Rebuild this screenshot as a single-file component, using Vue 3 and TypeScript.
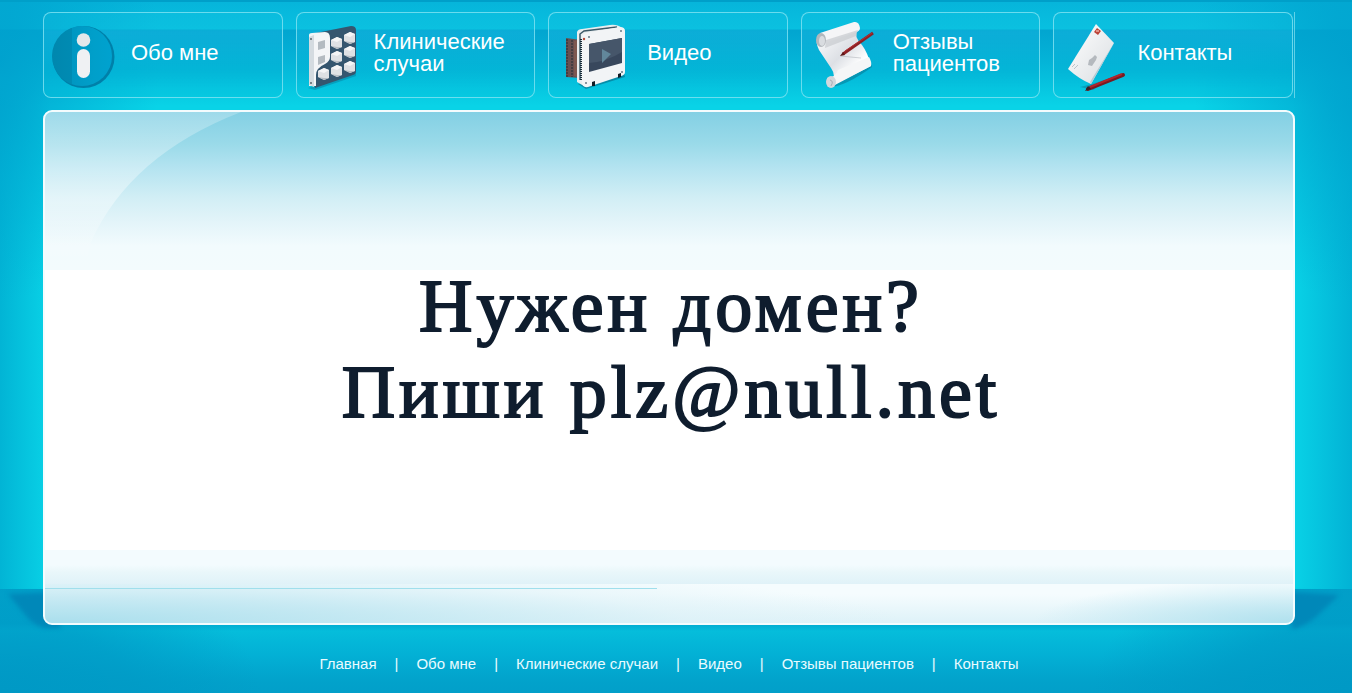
<script setup lang="ts">
interface NavItem {
  id: string
  label: string
  href: string
}

const items: NavItem[] = [
  { id: 'about', label: 'Обо мне', href: '#about' },
  { id: 'cases', label: 'Клинические\nслучаи', href: '#cases' },
  { id: 'video', label: 'Видео', href: '#video' },
  { id: 'reviews', label: 'Отзывы\nпациентов', href: '#reviews' },
  { id: 'contacts', label: 'Контакты', href: '#contacts' },
]

const footerLinks = [
  { label: 'Главная', href: '#' },
  ...items.map((item) => ({ label: item.label.replace('\n', ' '), href: item.href })),
]

const keys = [
  [337, 43], [350, 38],
  [337, 57], [350, 52],
  [324, 74], [337, 71], [350, 67],
]
</script>

<template>
  <div class="page">
    <div class="backdrop" aria-hidden="true">
      <div class="sky"></div>
      <div class="floor"></div>
      <svg class="fold fold-left" viewBox="0 0 60 50" preserveAspectRatio="none">
        <path d="M8 5 L60 3 L60 39 L44 39 Q34 36 27 28 Z" />
      </svg>
      <svg class="fold fold-right" viewBox="0 0 60 50" preserveAspectRatio="none">
        <path d="M47 6 L0 3 L0 40 Q12 38 24 28 Z" />
      </svg>
    </div>

    <nav class="nav" aria-label="Основное меню">
      <a v-for="item in items" :key="item.id" class="nav-item" :href="item.href">
        <svg v-if="item.id === 'about'" class="icon" width="68" height="72" viewBox="51 19 68 72" aria-hidden="true">
          <defs>
            <linearGradient id="disc" x1="0" x2="1">
              <stop offset="0" stop-color="#0087ae" />
              <stop offset=".33" stop-color="#008bb3" />
              <stop offset=".34" stop-color="#0097c2" />
              <stop offset=".7" stop-color="#009fca" />
              <stop offset="1" stop-color="#00a2cf" />
            </linearGradient>
          </defs>
          <circle cx="83.500" cy="57" r="31" fill="#0080a9" />
          <circle cx="82" cy="56" r="30" fill="url(#disc)" />
          <circle cx="83.500" cy="40" r="6.800" fill="#e6e8ea" />
          <rect x="77" y="49" width="13" height="29" rx="6.500" fill="#eff1f3" />
        </svg>

        <svg v-else-if="item.id === 'cases'" class="icon" width="58" height="72" viewBox="304 19 58 72" aria-hidden="true">
          <path d="M308 88 L315 90 L356 76 L356 72 Z" fill="#087fa0" opacity=".5" />
          <path d="M311 34 L351 26 Q356 26 356 30 V71 Q356 74 353 75 L315 88 Z" fill="#35566f" />
          <path d="M309 35 Q309 33 312 33 L325 32 Q330 32 330 38 V57 Q330 61 325 64 Q316 68 316 75 V86 L309 86 Z" fill="#f3f5f7" />
          <path d="M309 37 L314 35 V87 L309 85 Z" fill="#d4dbe0" />
          <path d="M318 42 L325 40 V48 L318 50 Z M318 57 L325 55 V62 L318 65 Z" fill="#b4bbc1" />
          <circle cx="311" cy="39" r="1" fill="#59636b" />
          <circle cx="311" cy="83" r="1" fill="#59636b" />
          <g v-for="(key, index) in keys" :key="index" :transform="`translate(${key[0]} ${key[1]})`">
            <path d="M-6 -3 L0 -6 L5 -4 V4 L0 6 L-6 3 Z" fill="#dfe1e4" />
            <path d="M-6 -3 L0 -6 L5 -4 L0 -1 Z" fill="#f5f5f6" />
            <path d="M-6 3 L0 6 L5 4 L0 4 Z" fill="#b5bcc3" />
          </g>
        </svg>

        <svg v-else-if="item.id === 'video'" class="icon" width="79" height="72" viewBox="556 19 79 72" aria-hidden="true">
          <path d="M578 84 L586 89 L625 77 L624 73 Z" fill="#08647d" opacity=".55" />
          <path d="M566 38 L581 40 V78 L566 77 Z" fill="#684f50" />
          <path d="M567 39 V77 M572 40 V77" stroke="#453e43" stroke-width="2" stroke-dasharray="2 1" />
          <path d="M574 41 L580 39 V78 L574 76 Z" fill="#7d5750" />
          <path d="M577 32 Q578 29 582 29 L610 25 Q617 24 622 28 L585 34 L584 86 L577 82 Z" fill="#e9edef" />
          <path d="M580 80 V34 L584 31 L617 27" fill="none" stroke="#3c5968" stroke-width="1.500" />
          <path d="M581 39 V81" stroke="#182b38" stroke-width="2" stroke-dasharray="1 1" />
          <path d="M585 33 L620 27 Q625 27 625 31 V72 Q625 75 621 76 L588 87 Q582 88 582 82 V37 Q582 34 585 33 Z" fill="#f2f4f6" />
          <path d="M589 44 L622 38 V63 L589 72 Z" fill="#38475c" />
          <path d="M589 44 L622 38 V52 Q606 62 589 63 Z" fill="#46566a" />
          <path d="M602 49 L611 54 L602 63 Z" fill="#62879b" />
          <circle cx="584" cy="39" r="1.200" fill="#b64839" />
          <g fill="#667985">
            <circle cx="589" cy="37" r="1" />
            <circle cx="621" cy="31" r="1" />
            <circle cx="586" cy="83" r="1" />
            <circle cx="622" cy="72" r="1" />
          </g>
          <path d="M592 82 L595 81 V86 L592 86 Z M618 74 L621 73 V77 L618 78 Z" fill="#111c26" />
        </svg>

        <svg v-else-if="item.id === 'reviews'" class="icon" width="72" height="72" viewBox="808 19 72 72" aria-hidden="true">
          <defs>
            <linearGradient id="scroll" x1="0" y1="0" x2="1" y2="1">
              <stop offset="0" stop-color="#ffffff" />
              <stop offset=".45" stop-color="#dde0e5" />
              <stop offset=".7" stop-color="#ffffff" />
              <stop offset="1" stop-color="#dcdfe4" />
            </linearGradient>
          </defs>
          <path d="M829 87 Q845 86 871 67 L870 64 L828 80 Z" fill="#075e7b" opacity=".4" />
          <path d="M817 38 L857 30 Q852 36 861 45 Q867 53 870 66 L830 86 Q836 76 830 68 L818 50 Q814 42 817 38 Z" fill="url(#scroll)" />
          <path d="M819 33 L853 22 Q858 21 859 28 Q859 31 855 32 L821 44 Z" fill="#f5f5f7" />
          <path d="M825 40 L857 30 Q855 34 855 36 L824 48 Z" fill="#c7cacf" opacity=".7" />
          <ellipse cx="820" cy="40" rx="5" ry="7" fill="#b3b7bc" />
          <ellipse cx="821" cy="41" rx="3" ry="5" fill="#d9dce0" />
          <path d="M826 78 Q835 77 837 70 L868 57 Q871 62 870 66 L832 86 Z" fill="#f5f6f7" />
          <ellipse cx="830" cy="82" rx="5" ry="6" fill="#d3d7dc" />
          <path d="M829 80 Q833 81 830 86" fill="none" stroke="#a9adb3" />
          <path d="M839 56 L860 58" stroke="#a6abb2" opacity=".5" />
          <path d="M842 54 L872 33" stroke="#8e2024" stroke-width="3" />
          <path d="M839 56 L842 52 L844 55 Z" fill="#5b1717" />
          <path d="M844 51 L871 33" stroke="#b03034" />
        </svg>

        <svg v-else class="icon" width="64" height="72" viewBox="1061 19 64 72" aria-hidden="true">
          <defs>
            <linearGradient id="envelope" x1="0" y1="0" x2="1" y2="1">
              <stop offset="0" stop-color="#ffffff" />
              <stop offset="1" stop-color="#d9dde1" />
            </linearGradient>
          </defs>
          <path d="M1080 87 L1092 84 L1113 77 L1093 90 Z" fill="#087391" opacity=".45" />
          <path d="M1096 24 L1114 43 L1091 84 Q1079 79 1068 69 Z" fill="url(#envelope)" />
          <path d="M1114 43 L1091 84 L1090 82 Z" fill="#b4cbd4" />
          <path d="M1097 28 L1101 31 L1098 35 L1094 32 Z" fill="#bd4338" />
          <path d="M1096 31 H1099" stroke="#ffe4d7" />
          <path d="M1088 65 L1089 60 L1092 58 L1095 55 L1097 57 L1096 60 L1092 66 Z" fill="#b4b9be" />
          <path d="M1072 67 L1075 64 M1074 69 L1078 65" stroke="#bbc4ca" />
          <path d="M1088 89 L1123 75" stroke="#781b22" stroke-width="4" stroke-linecap="round" />
          <path d="M1090 87 L1122 74" stroke="#b0252b" stroke-width="2" />
          <path d="M1085 91 L1088 86 L1091 89 Z" fill="#32222a" />
        </svg>

        <span class="nav-label">{{ item.label }}</span>
      </a>
    </nav>

    <main class="panel">
      <div class="panel-top" aria-hidden="true">
        <svg class="swoosh" viewBox="0 0 200 150" aria-hidden="true">
          <defs>
            <linearGradient id="swoosh" x1="0" y1="0" x2="0" y2="1">
              <stop offset="0" stop-color="#ffffff" stop-opacity=".22" />
              <stop offset=".6" stop-color="#ffffff" stop-opacity=".4" />
              <stop offset="1" stop-color="#ffffff" stop-opacity="0" />
            </linearGradient>
          </defs>
          <path d="M0 0 H196 Q85 43 46 130 L42 150 H0 Z" fill="url(#swoosh)" />
        </svg>
      </div>
      <div class="panel-bottom" aria-hidden="true">
        <div class="panel-glow"></div>
        <div class="panel-line"></div>
      </div>
      <h1 class="headline">
        Нужен домен?<br />
        Пиши plz@null.net
      </h1>
    </main>

    <footer class="footer">
      <template v-for="(link, index) in footerLinks" :key="link.label">
        <span v-if="index > 0" class="divider">|</span>
        <a class="footer-link" :href="link.href">{{ link.label }}</a>
      </template>
    </footer>
  </div>
</template>

<style>
body {
  margin: 0;
}
</style>

<style scoped>
.page {
  position: relative;
  box-sizing: border-box;
  display: flex;
  flex-direction: column;
  min-height: 100vh;
  padding: 12px 57px 0 43px;
  overflow: hidden;
  background: #05cfe4;
  font-family: "Liberation Sans", Arial, sans-serif;
}

.backdrop {
  position: absolute;
  inset: 0;
}

.sky {
  position: absolute;
  inset: 0;
  background:
    linear-gradient(#009fc9 0 2px, transparent 2px),
    radial-gradient(ellipse 160px 240px at 0 60px, rgba(0, 160, 205, 0.9), rgba(0, 165, 208, 0.5) 50%, transparent),
    radial-gradient(ellipse 160px 240px at 100% 60px, rgba(0, 160, 205, 0.9), rgba(0, 165, 208, 0.5) 50%, transparent),
    linear-gradient(#06b4da 0, #08c0e0 29px, #02a5d0 30px, #04b3d7 60px, rgba(5, 190, 220, 0.9) 80px, rgba(8, 212, 232, 0) 106px),
    linear-gradient(90deg, #02b4d5, #09d3e7 50px, #09d3e7 calc(100% - 60px), #02b2d5);
}

.floor {
  position: absolute;
  right: 0;
  bottom: 0;
  left: 0;
  height: 104px;
  background:
    radial-gradient(ellipse 260px 140px at 0 100%, #0099c5, rgba(0, 153, 197, 0.7) 50%, transparent),
    radial-gradient(ellipse 260px 140px at 100% 100%, #0099c5, rgba(0, 153, 197, 0.7) 50%, transparent),
    linear-gradient(#01a2ca 0, #01a9cf 34px, #05bddb 42px, #03b0d5 66px, #02a2cb 92px, #029fc9);
}

.fold {
  position: absolute;
  bottom: 54px;
  width: 60px;
  height: 50px;
  fill: #0088b9;
  filter: blur(2px);
}

.fold-left {
  left: 0;
}

.fold-right {
  right: 0;
}

.nav {
  position: relative;
  display: grid;
  grid-template-columns: repeat(5, 1fr);
  gap: 13px;
  padding-right: 1px;
  border-right: 1px solid rgba(160, 235, 245, 0.6);
}

.nav-item {
  box-sizing: border-box;
  display: flex;
  align-items: center;
  gap: 12px;
  height: 86px;
  padding-left: 7px;
  border: 1px solid rgba(140, 230, 243, 0.75);
  border-radius: 8px;
  background: linear-gradient(rgba(20, 195, 225, 0.3) 0 17px, rgba(20, 178, 220, 0.6) 18px, rgba(3, 178, 213, 0.6) 56px, rgba(5, 195, 222, 0.4) 75px);
  color: #ffffff;
  text-decoration: none;
}

.icon {
  flex: none;
  overflow: visible;
}

.nav-label {
  padding-bottom: 4px;
  font-size: 22px;
  line-height: 22px;
  white-space: pre;
}

.panel {
  position: relative;
  box-sizing: border-box;
  display: flex;
  flex: 1;
  align-items: center;
  justify-content: center;
  min-height: 400px;
  margin-top: 12px;
  padding-bottom: 38px;
  overflow: hidden;
  border: 2px solid #f4fcfe;
  border-radius: 9px;
  background: #ffffff;
}

.panel-top {
  position: absolute;
  top: 0;
  right: 0;
  left: 0;
  height: 158px;
  background: linear-gradient(#83d0e4, #9adae9 32px, #b3e3f0 55px, #d1eef5 85px, #e3f4f9 110px, #f2fbfd 134px, #f3fbfd);
}

.swoosh {
  display: block;
  width: 200px;
  height: 150px;
}

.panel-bottom {
  position: absolute;
  right: 0;
  bottom: 0;
  left: 0;
  height: 73px;
  background: linear-gradient(#f3fbfe 0 15px, #e9f7fa 22px, #e0f2f8 34px, #e0f2f8);
}

.panel-glow {
  position: absolute;
  right: 0;
  bottom: 0;
  left: 0;
  height: 39px;
  background:
    radial-gradient(ellipse 260px 44px at 100% 100%, #b0e1ee, rgba(176, 225, 238, 0)),
    radial-gradient(ellipse 860px 64px at 0 100%, #aadfed, rgba(190, 230, 241, 0.8) 40%, rgba(220, 241, 247, 0.5) 75%, rgba(230, 245, 250, 0)),
    linear-gradient(#f5fcfe 10px, #def2f8);
}

.panel-line {
  position: absolute;
  bottom: 34px;
  left: 0;
  width: 49%;
  height: 1px;
  background: #a0dfec;
}

.headline {
  position: relative;
  margin: 0;
  padding-left: 4px;
  color: #0f1d2e;
  font-family: "Liberation Serif", "Times New Roman", serif;
  font-size: 74px;
  font-weight: 400;
  line-height: 86px;
  letter-spacing: 4px;
  text-align: center;
  -webkit-text-stroke: 2px #0f1d2e;
}

.footer {
  position: relative;
  display: flex;
  flex-wrap: wrap;
  align-items: center;
  justify-content: center;
  gap: 0 18px;
  box-sizing: border-box;
  min-height: 68px;
  padding-top: 10px;
  color: #e9fbff;
  font-size: 15px;
  line-height: 18px;
}

.footer-link {
  color: inherit;
  text-decoration: none;
}
</style>
